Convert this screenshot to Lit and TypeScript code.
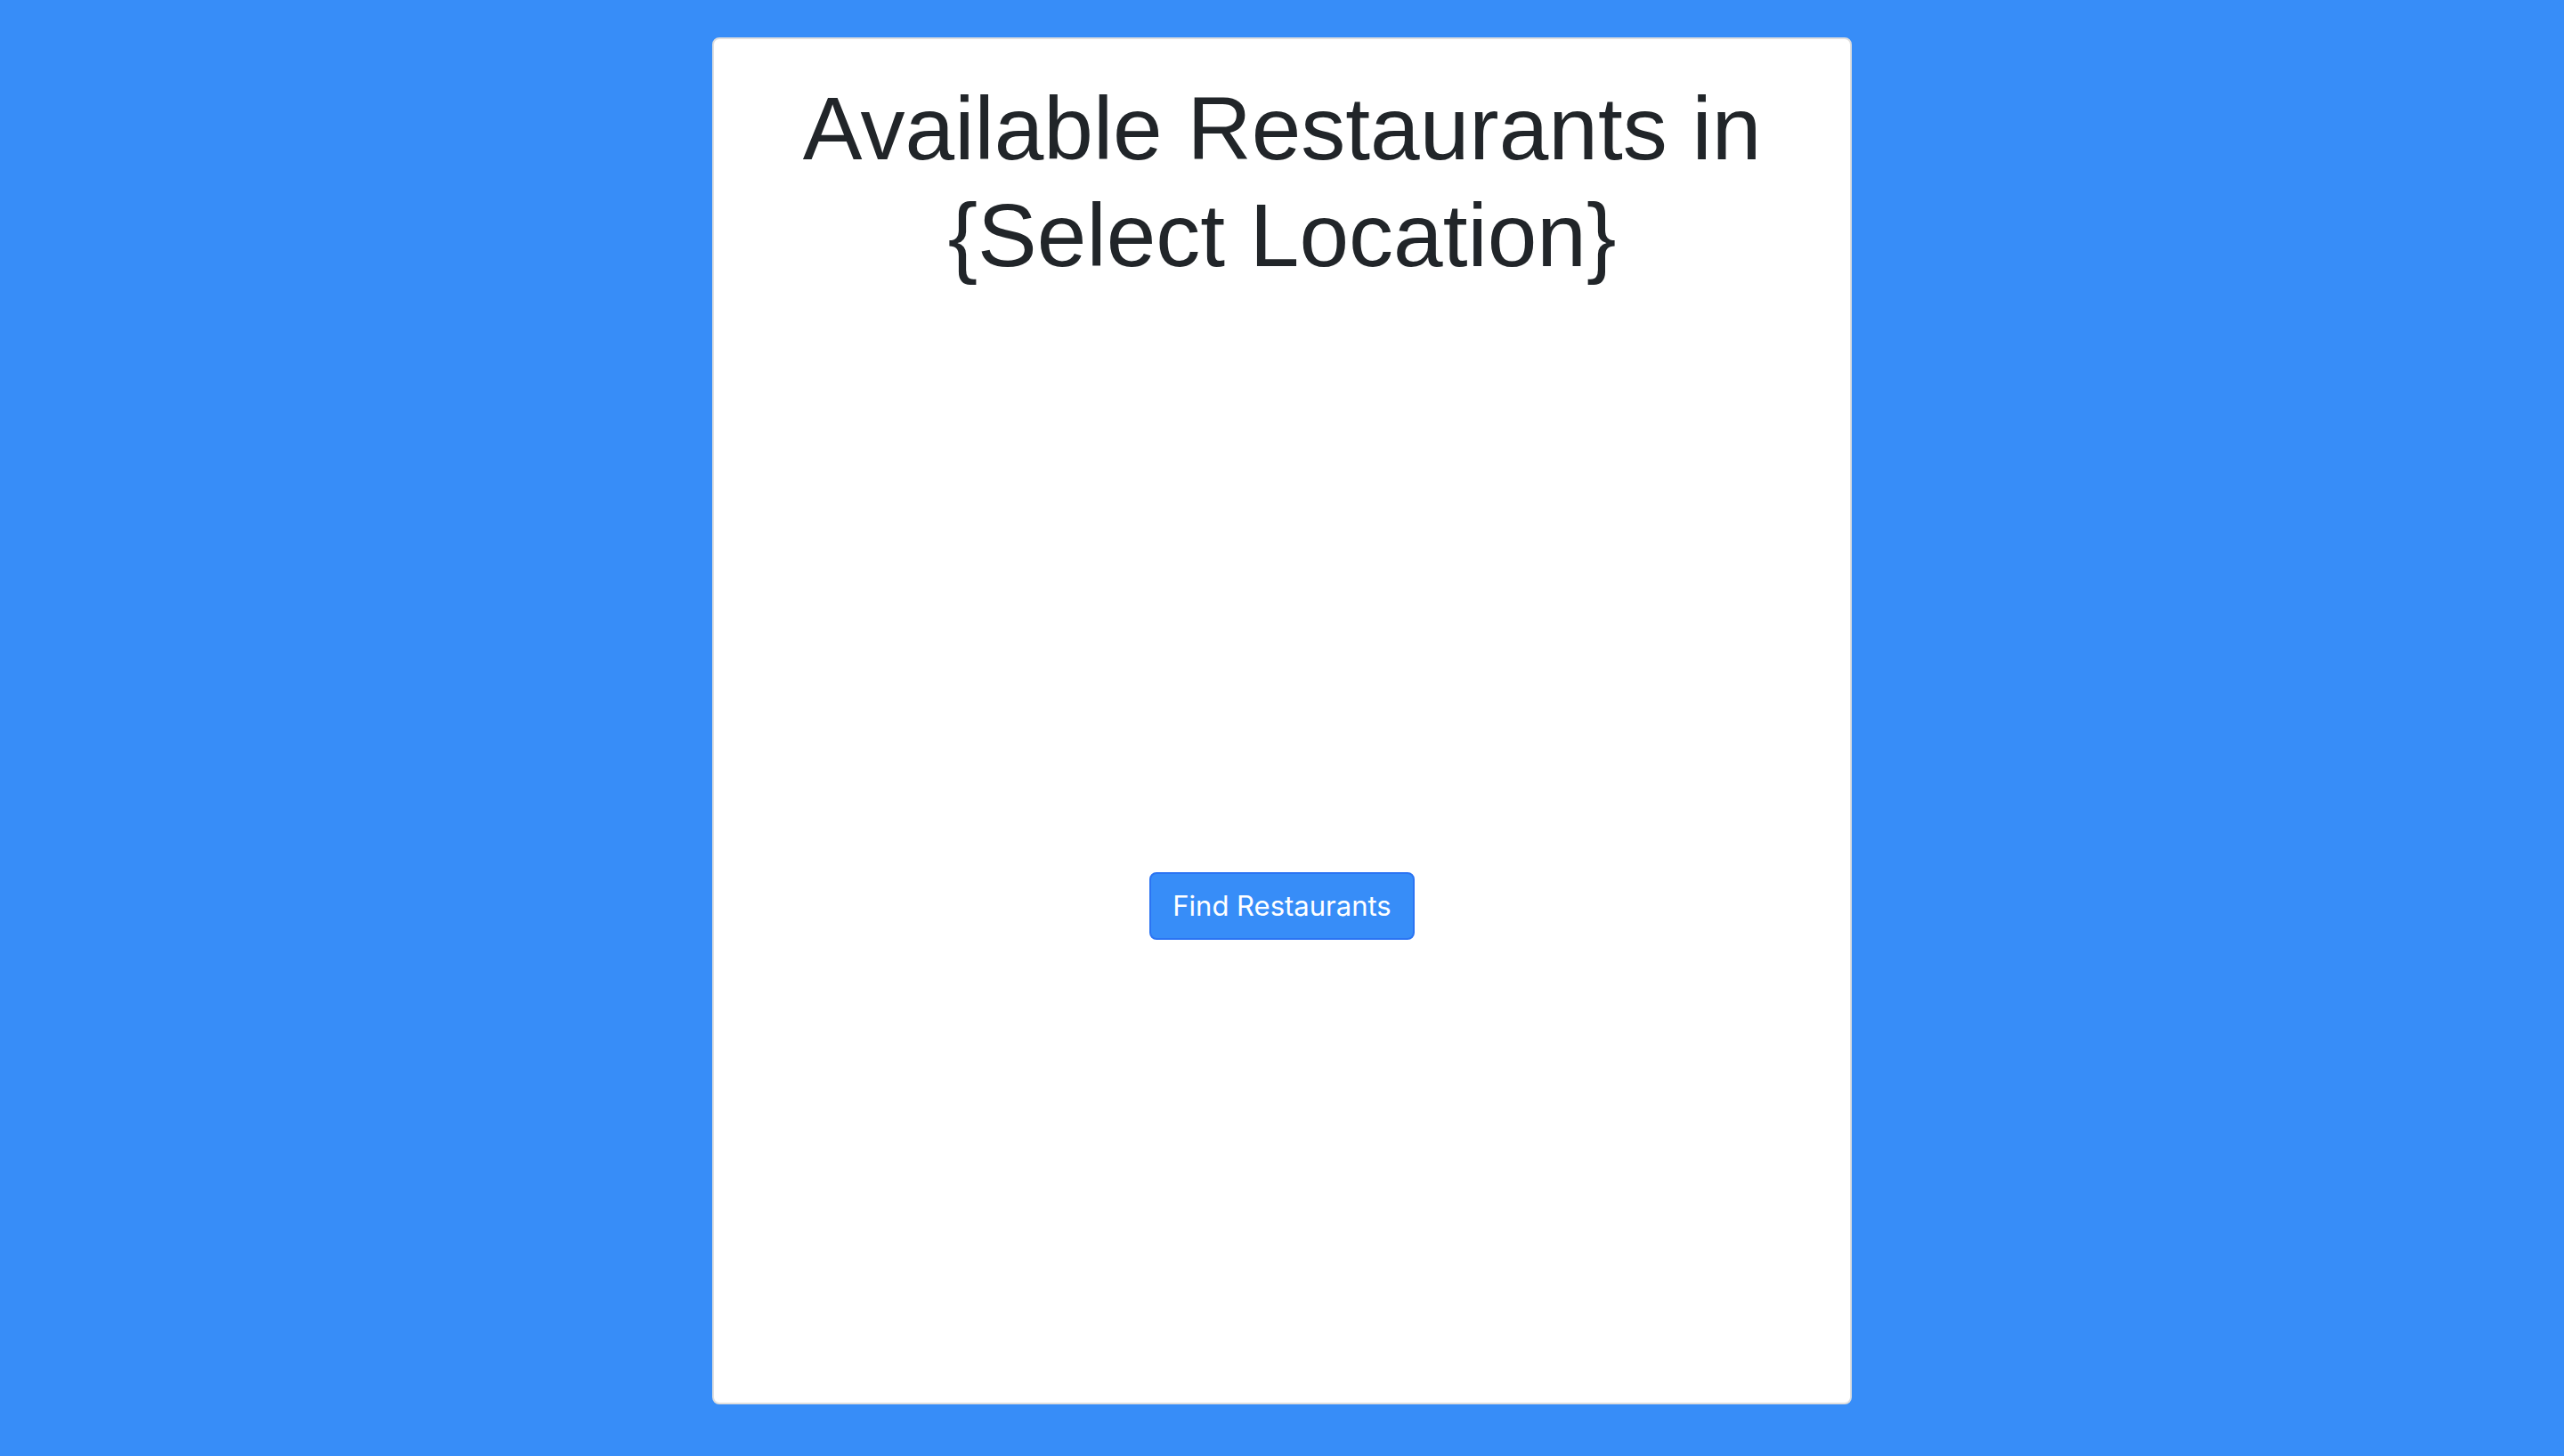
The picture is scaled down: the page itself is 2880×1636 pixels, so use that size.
import { LitElement, html, css } from "lit";
import { customElement } from "lit/decorators.js";

@customElement("app-root")
export class AppRoot extends LitElement {
  static styles = css`
    :host {
      box-sizing: border-box;
      min-height: 100vh;
      padding: 42px 32px 58px;
      display: flex;
      justify-content: center;
      background: #378df8;
      color: #212529;
      font-family: "Liberation Sans", Arial, sans-serif;
    }
    .card {
      box-sizing: border-box;
      width: 100%;
      max-width: 1280px;
      padding: 40px;
      display: flex;
      flex-direction: column;
      align-items: center;
      gap: 656px;
      border: 2px solid #dfdfdf;
      border-radius: 8px;
      background: #fff;
    }
    .title {
      margin: 0;
      font-size: 100px;
      font-weight: 400;
      line-height: 120px;
      text-align: center;
    }
    .find {
      padding: 12px 24px;
      border: 2px solid #2b74f3;
      border-radius: 8px;
      background: #378df8;
      color: #fff;
      font-family: Inter, "Liberation Sans", sans-serif;
      font-size: 31px;
      line-height: 48px;
      cursor: pointer;
    }
  `;

  render() {
    return html`
      <main class="card">
        <h1 class="title">Available Restaurants in {Select Location}</h1>
        <button class="find" type="button">Find Restaurants</button>
      </main>
    `;
  }
}
